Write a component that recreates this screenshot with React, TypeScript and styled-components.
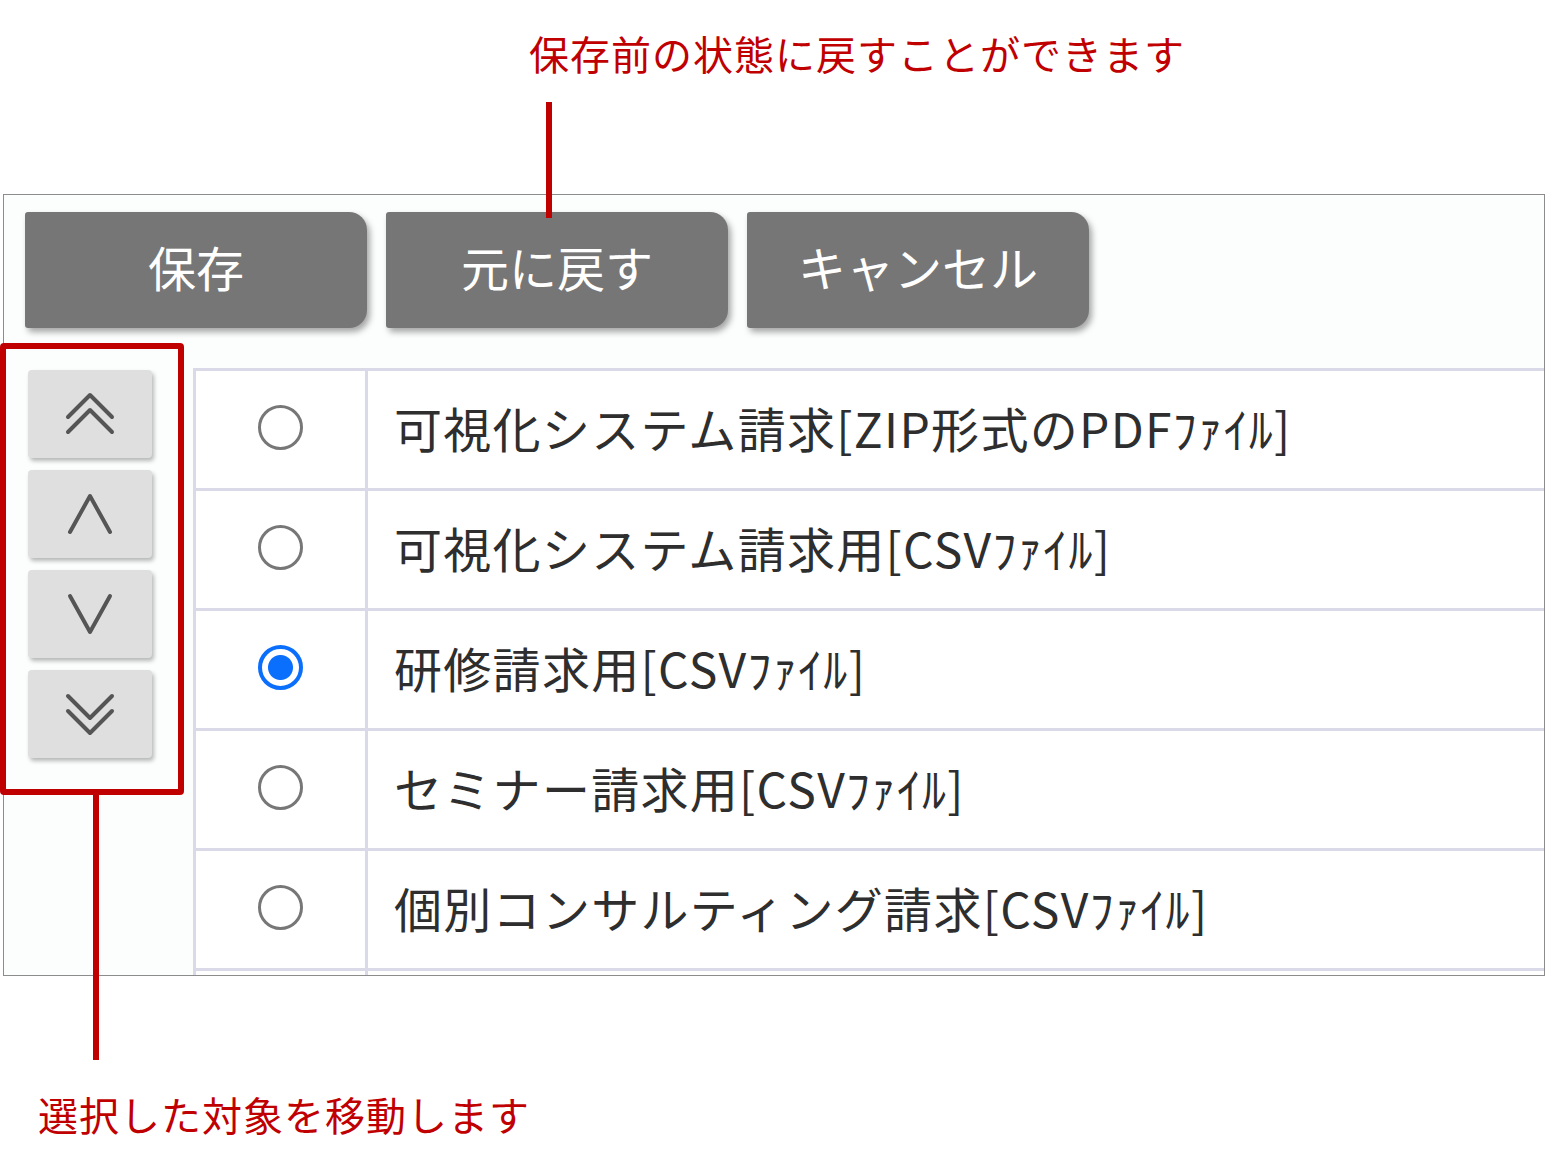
import styled, { createGlobalStyle } from 'styled-components';

const GlobalStyle = createGlobalStyle`
  body {
    margin: 0;
    background: #ffffff;
    font-family: 'Noto Sans CJK JP', 'Noto Sans', sans-serif;
  }
`;

const RED = '#c00000';

type Direction = 'top' | 'up' | 'down' | 'bottom';

const files = [
  { id: 1, label: '可視化システム請求[ZIP形式のPDFﾌｧｲﾙ]' },
  { id: 2, label: '可視化システム請求用[CSVﾌｧｲﾙ]' },
  { id: 3, label: '研修請求用[CSVﾌｧｲﾙ]' },
  { id: 4, label: 'セミナー請求用[CSVﾌｧｲﾙ]' },
  { id: 5, label: '個別コンサルティング請求[CSVﾌｧｲﾙ]' },
  { id: 6, label: '' },
];

const ChevronIcon = ({ dir }: { dir: Direction }) => {
  const flip = dir === 'down' || dir === 'bottom';
  const double = dir === 'top' || dir === 'bottom';

  return (
    <svg width="52" height="44" viewBox="0 0 52 44" fill="none" stroke="#555" strokeWidth="4" strokeLinecap="round" strokeLinejoin="round">
      <g transform={flip ? 'matrix(1 0 0 -1 0 44)' : undefined}>
        {double ? (
          <>
            <polyline points="4,25 26,3 48,25" />
            <polyline points="4,40 26,18 48,40" />
          </>
        ) : (
          <polyline points="6,40 26,4 46,40" />
        )}
      </g>
    </svg>
  );
};

const App = () => {
  return (
    <>
      <GlobalStyle />
      <Page>
        <TopNote>
          <NoteText $indent={529}>保存前の状態に戻すことができます</NoteText>
          <TopLeader />
        </TopNote>

        <Frame>
          <Toolbar>
            <ActionButton>保存</ActionButton>
            <ActionButton>元に戻す</ActionButton>
            <ActionButton>キャンセル</ActionButton>
          </Toolbar>

          <Body>
            <MoverPanel>
              {(['top', 'up', 'down', 'bottom'] as Direction[]).map((dir) => (
                <MoveButton key={dir}>
                  <ChevronIcon dir={dir} />
                </MoveButton>
              ))}
            </MoverPanel>

            <TableWrap>
              {files.map((it) => (
                <Row key={it.id}>
                  <RadioCell>
                    {it.label && <Radio type="radio" name="file" defaultChecked={it.id === 3} />}
                  </RadioCell>
                  <LabelCell>{it.label}</LabelCell>
                </Row>
              ))}
            </TableWrap>
          </Body>
        </Frame>

        <NoteText $indent={38} $top={118}>
          選択した対象を移動します
        </NoteText>
      </Page>
    </>
  );
};

const Page = styled.div`
  width: 1546px;
  height: 1170px;
  display: flex;
  flex-direction: column;
`;

const TopNote = styled.div`
  display: flex;
  flex-direction: column;
  padding-top: 33px;
`;

const NoteText = styled.div<{ $indent: number; $top?: number }>`
  padding-left: ${(p) => p.$indent}px;
  margin-top: ${(p) => p.$top ?? 0}px;
  font-size: 40px;
  line-height: 40px;
  letter-spacing: 1px;
  color: ${RED};
  white-space: nowrap;
`;

const TopLeader = styled.div`
  position: relative;
  z-index: 2;
  width: 6px;
  height: 116px;
  margin: 29px 0 -24px 546px;
  background: ${RED};
`;

const Frame = styled.div`
  box-sizing: border-box;
  width: 1542px;
  height: 782px;
  margin-left: 3px;
  border: 1px solid #8c8c8c;
  background: #fcfdfd;
  display: flex;
  flex-direction: column;
`;

const Toolbar = styled.div`
  display: flex;
  gap: 19px;
  padding: 17px 0 0 21px;
`;

const ActionButton = styled.button`
  width: 342px;
  height: 116px;
  border: none;
  border-radius: 3px 18px 18px 3px;
  background: #767676;
  box-shadow: 3px 4px 6px rgba(0, 0, 0, 0.35);
  color: #ffffff;
  font-family: inherit;
  font-size: 48px;
  padding: 0 0 8px;
  cursor: pointer;
`;

const Body = styled.div`
  flex: 1;
  min-height: 0;
  display: flex;
  align-items: flex-start;
`;

const MoverPanel = styled.div`
  position: relative;
  box-sizing: border-box;
  width: 184px;
  height: 452px;
  margin: 15px 0 0 -4px;
  padding: 21px 0 0 22px;
  border: 6px solid ${RED};
  border-radius: 4px;
  display: flex;
  flex-direction: column;
  gap: 12px;
  flex-shrink: 0;

  &::after {
    content: '';
    position: absolute;
    left: 87px;
    top: 100%;
    width: 6px;
    height: 271px;
    background: ${RED};
  }
`;

const MoveButton = styled.button`
  width: 124px;
  height: 88px;
  border: none;
  border-radius: 4px;
  background: #dfdfdf;
  box-shadow: 2px 3px 4px rgba(0, 0, 0, 0.28);
  display: flex;
  align-items: center;
  justify-content: center;
  padding: 0;
  cursor: pointer;
`;

const TableWrap = styled.div`
  flex: 1;
  align-self: stretch;
  margin: 40px 0 0 9px;
  overflow: hidden;
  background: #ffffff;
`;

const Row = styled.div`
  box-sizing: border-box;
  height: 120px;
  display: grid;
  grid-template-columns: 175px 1fr;
  border-top: 3px solid #d9d9e8;
`;

const RadioCell = styled.div`
  display: flex;
  align-items: center;
  justify-content: center;
  border-left: 3px solid #d9d9e8;
  border-right: 3px solid #d9d9e8;
`;

const Radio = styled.input`
  appearance: none;
  box-sizing: border-box;
  width: 45px;
  height: 45px;
  margin: 0 0 4px;
  border: 3px solid #777777;
  border-radius: 50%;
  background: #ffffff;

  &:checked {
    border: 4px solid #0b6ffd;
    background: radial-gradient(circle, #0b6ffd 0 12px, #ffffff 13px);
  }
`;

const LabelCell = styled.div`
  display: flex;
  align-items: center;
  padding: 0 0 6px 26px;
  font-size: 48px;
  letter-spacing: 1.3px;
  color: #2e2e2e;
  white-space: nowrap;
`;

export default App;
